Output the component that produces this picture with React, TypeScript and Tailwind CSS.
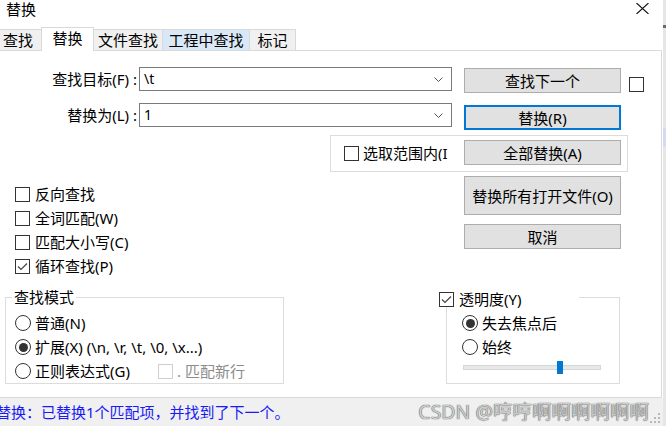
import React from "react";

function CheckBox({ checked = false, disabled = false }: { checked?: boolean; disabled?: boolean }) {
  return (
    <span
      className={`relative inline-flex shrink-0 w-[15px] h-[15px] border bg-white ${
        disabled ? "border-[#cfcfcf]" : "border-[#333333]"
      }`}
    >
      {checked && (
        <svg viewBox="0 0 13 13" className="absolute left-0 top-0 w-[13px] h-[13px]">
          <path d="M2 6.5 L5 9.5 L11 3.5" fill="none" stroke="#444" strokeWidth="1.2" />
        </svg>
      )}
    </span>
  );
}

function Radio({ checked = false }: { checked?: boolean }) {
  return (
    <span className="inline-flex shrink-0 w-[16px] h-[16px] rounded-full border border-[#333333] bg-white items-center justify-center">
      {checked && <span className="w-[9px] h-[9px] rounded-full bg-[#333333]" />}
    </span>
  );
}

function Combo({ value }: { value: string }) {
  return (
    <div className="flex items-center w-[313px] h-[24px] border border-[#7a7a7a] bg-white pl-[4px]">
      <span className="flex-1 text-[14px] leading-[20px] text-black">{value}</span>
      <svg width="9" height="5" className="mr-[8px]">
        <path d="M0.5 0.5 L4.5 4.5 L8.5 0.5" stroke="#555" fill="none" strokeWidth="1" />
      </svg>
    </div>
  );
}

function Btn({ children, h = "h-[25px]", focus = false, mt }: { children: React.ReactNode; h?: string; focus?: boolean; mt: string }) {
  return (
    <div
      className={`${mt} ${h} w-[157px] flex items-center justify-center bg-[#e1e1e1] text-[15px] leading-[18px] text-black ${
        focus ? "border-2 border-[#0078d7]" : "border border-[#adadad]"
      }`}
    >
      {children}
    </div>
  );
}

function Tab({ label, w, active = false, hover = false }: { label: string; w: string; active?: boolean; hover?: boolean }) {
  return (
    <div
      className={`${w} -ml-px flex items-center justify-center border-t border-l border-r border-[#d9d9d9] text-[15px] leading-[18px] text-black ${
        active ? "relative z-10 h-[24px] -mb-px bg-white pb-[3px]" : hover ? "h-[21px] bg-[#d9e8f7]" : "h-[21px] bg-[#f0f0f0]"
      }`}
    >
      {label}
    </div>
  );
}

export default function App() {
  return (
    <div className="w-[666px] h-[426px] flex bg-white overflow-hidden font-['Noto_Sans','Noto_Sans_CJK_SC',sans-serif] text-black">
      <div className="w-[663px] h-full flex flex-col">
        {/* title */}
        <div className="h-[27px] flex items-start justify-between">
          <span className="ml-[6px] mt-[0px] text-[15px] leading-[18px]">替换</span>
          <svg width="13" height="11" className="mt-[3px] mr-[14px]" viewBox="0 0 13 11">
            <path d="M0.5 0 L12.5 11 M12.5 0 L0.5 11" stroke="#111" strokeWidth="1.1" />
          </svg>
        </div>
        {/* tabs */}
        <div className="h-[23px] flex items-end ml-[-5px]">
          <Tab label="查找" w="w-[48px]" />
          <Tab label="替换" w="w-[53px]" active />
          <Tab label="文件查找" w="w-[70px]" />
          <Tab label="工程中查找" w="w-[88px]" hover />
          <Tab label="标记" w="w-[47px]" />
        </div>
        {/* panel */}
        <div className="relative w-[662px] h-[348px] border-t border-r border-b border-[#d9d9d9] bg-white flex flex-col">
          {/* selection group outline */}
          <div className="absolute left-[330px] top-[84px] w-[298px] h-[37px] border border-[#dcdcdc]" />
          <div className="flex">
            {/* left */}
            <div className="w-[464px] flex flex-col">
              <div className="mt-[16px] flex items-center h-[24px]">
                <span className="w-[139px] pr-[2px] text-right text-[15px] leading-[18px] whitespace-nowrap">查找目标(F) :</span>
                <Combo value={"\\t"} />
              </div>
              <div className="mt-[12px] flex items-center h-[24px]">
                <span className="w-[139px] pr-[2px] text-right text-[15px] leading-[18px] whitespace-nowrap">替换为(L) :</span>
                <Combo value="1" />
              </div>
              <div className="mt-[18px] ml-[344px] w-[104px] h-[16px] flex items-center gap-[4px] overflow-hidden whitespace-nowrap">
                <CheckBox />
                <span className="text-[15px] leading-[18px]">选取范围内(I)</span>
              </div>
              <div className="mt-[21px] flex flex-col">
                {[
                  { t: "反向查找", c: false },
                  { t: "全词匹配(W)", c: false },
                  { t: "匹配大小写(C)", c: false },
                  { t: "循环查找(P)", c: true },
                ].map((r) => (
                  <div key={r.t} className="h-[24px] flex items-center gap-[5px] pl-[15px]">
                    <CheckBox checked={r.c} />
                    <span className="text-[15px] leading-[18px]">{r.t}</span>
                  </div>
                ))}
              </div>
            </div>
            {/* buttons */}
            <div className="w-[157px] flex flex-col">
              <Btn mt="mt-[17px]">查找下一个</Btn>
              <Btn mt="mt-[12px]" focus>替换(R)</Btn>
              <Btn mt="mt-[10px]">全部替换(A)</Btn>
              <Btn mt="mt-[11px]" h="h-[39px]">替换所有打开文件(O)</Btn>
              <Btn mt="mt-[9px]">取消</Btn>
            </div>
            <div className="ml-[8px] mt-[23px]">
              <CheckBox />
            </div>
          </div>
          {/* bottom groups */}
          <div className="mt-[19px] flex items-start">
            <div className="relative ml-[5px] w-[279px] h-[87px] border border-[#dcdcdc] pt-[13px] flex flex-col">
              <span className="absolute left-[6px] top-[-10px] px-[2px] bg-white text-[15px] leading-[18px]">查找模式</span>
              <div className="h-[24px] flex items-center gap-[4px] pl-[9px]">
                <Radio />
                <span className="text-[15px] leading-[18px]">普通(N)</span>
              </div>
              <div className="h-[24px] flex items-center gap-[4px] pl-[9px]">
                <Radio checked />
                <span className="text-[15px] leading-[18px] whitespace-nowrap">扩展(X) (\n, \r, \t, \0, \x...)</span>
              </div>
              <div className="h-[24px] flex items-center pl-[9px]">
                <Radio />
                <span className="ml-[4px] w-[123px] text-[15px] leading-[18px] whitespace-nowrap">正则表达式(G)</span>
                <CheckBox disabled />
                <span className="ml-[4px] text-[15px] leading-[18px] text-[#8c8c8c] whitespace-nowrap">. 匹配新行</span>
              </div>
            </div>
            <div className="relative ml-[162px] w-[174px] h-[87px] border border-[#dcdcdc] pt-[13px] flex flex-col">
              <div className="absolute left-[-9px] top-[-7px] w-[141px] h-[16px] pl-[1px] flex items-center gap-[5px] bg-white">
                <CheckBox checked />
                <span className="text-[15px] leading-[18px] whitespace-nowrap">透明度(Y)</span>
              </div>
              <div className="h-[24px] flex items-center gap-[4px] pl-[15px]">
                <Radio checked />
                <span className="text-[15px] leading-[18px]">失去焦点后</span>
              </div>
              <div className="h-[24px] flex items-center gap-[4px] pl-[15px]">
                <Radio />
                <span className="text-[15px] leading-[18px]">始终</span>
              </div>
              <div className="relative mt-[2px] ml-[16px] w-[138px] h-[13px]">
                <div className="absolute left-0 right-0 top-[4px] h-[5px] bg-[#e7eae9] border border-[#d6d6d6]" />
                <div className="absolute left-[94px] top-0 w-[6px] h-[13px] bg-[#0078d7]" />
              </div>
            </div>
          </div>
        </div>
        {/* status bar */}
        <div className="h-[28px] bg-[#f0f0f0] flex items-center">
          <span className="ml-[-4px] text-[15px] leading-[18px] text-[#1a1af5] whitespace-nowrap">替换：已替换1个匹配项，并找到了下一个。</span>
          <span className="ml-auto mr-[1px] text-[19.5px] leading-[22px] text-[#cccccc] whitespace-nowrap [text-shadow:0_0_1px_#555,0_0_1px_#777]">
            CSDN @哼哼啊啊啊啊啊啊
          </span>
          <svg width="11" height="11" viewBox="0 0 11 11" className="self-end mb-[2px] mr-[2px]">
            <rect x="8" y="0" width="2" height="2" fill="#b8b8b8" />
            <rect x="4" y="4" width="2" height="2" fill="#b8b8b8" />
            <rect x="8" y="4" width="2" height="2" fill="#b8b8b8" />
            <rect x="0" y="8" width="2" height="2" fill="#b8b8b8" />
            <rect x="4" y="8" width="2" height="2" fill="#b8b8b8" />
            <rect x="8" y="8" width="2" height="2" fill="#b8b8b8" />
          </svg>
        </div>
      </div>
      {/* right strip */}
      <div className="w-[3px] h-full bg-[#e6e6e6] flex flex-col">
        <div className="mt-[25px] h-[3px] bg-[#6b6b6b]" />
        <div className="mt-[100px] h-[19px] bg-[#d6d9ef]" />
      </div>
    </div>
  );
}
